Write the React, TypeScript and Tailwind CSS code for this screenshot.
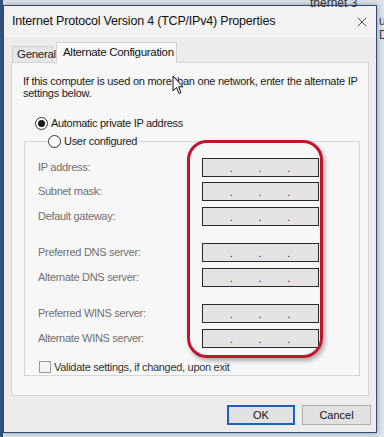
import React from "react";
import { X } from "lucide-react";

const font = { fontFamily: '"Liberation Sans", Arial, sans-serif' };

function IpBox() {
  return (
    <div className="w-[117px] h-[19px] border border-[#2a2a2a] bg-[#e3e3e3] grid grid-cols-4 text-[11px] leading-[19px] text-[#222]">
      <span />
      <span className="-ml-[2px]">.</span>
      <span className="-ml-[2px]">.</span>
      <span className="-ml-[2px]">.</span>
    </div>
  );
}

function Row({ label, className = "" }: { label: string; className?: string }) {
  return (
    <div className={"flex items-center h-[19px] " + className}>
      <div className="w-[164px] text-[11px] tracking-[-0.3px] text-[#6f6f6f]">{label}</div>
      <IpBox />
    </div>
  );
}

function Radio({ checked }: { checked?: boolean }) {
  return (
    <span className="w-[13px] h-[13px] rounded-full border border-[#333] bg-white flex items-center justify-center shrink-0">
      {checked && <span className="w-[7px] h-[7px] rounded-full bg-[#1a1a1a]" />}
    </span>
  );
}

export default function App() {
  return (
    <div className="relative w-[384px] h-[437px] bg-[#dde4ec] overflow-hidden" style={font}>
      {/* window behind */}
      <div className="absolute left-[310px] -top-[6px] text-[12px] text-[#333]">thernet 3</div>
      <div className="absolute left-[379px] top-[14px] text-[12px] leading-[14px] text-[#333]">u<br />D</div>
      <div className="absolute left-0 top-0 w-[3px] h-[437px] bg-[#33507a]" />

      <div className="ml-[3px] mt-[5px] w-[374px] h-[428px] border border-[#2d4a78] bg-[#ececec] flex flex-col shadow-[0_0_6px_rgba(0,0,0,0.35)]">
        {/* title bar */}
        <div className="h-[31px] bg-[#f2f2f2] flex items-center justify-between pl-[8px] pr-[6px] shrink-0">
          <span className="text-[12.5px] tracking-[-0.2px] text-[#111]">Internet Protocol Version 4 (TCP/IPv4) Properties</span>
          <X className="w-[16px] h-[16px] text-[#222]" strokeWidth={1.2} />
        </div>

        <div className="px-[7px] pt-[5px] flex flex-col">
          {/* tabs */}
          <div className="flex items-end h-[20px]">
            <div className="ml-[1px] h-[16px] w-[41px] border border-b-0 border-[#d0d0d0] bg-[#e6e6e6] text-[11.5px] tracking-[-0.3px] text-[#222] flex items-center pl-[4px]">
              General
            </div>
            <div className="ml-[3px] -mb-px relative z-10 h-[21px] w-[121px] border border-b-0 border-[#d0d0d0] bg-[#f8f8f8] text-[11.5px] tracking-[-0.3px] text-[#111] flex items-center pl-[6px]">
              Alternate Configuration
            </div>
          </div>

          {/* panel */}
          <div className="h-[334px] w-[358px] border border-[#d4d4d4] bg-[#f7f7f7] flex flex-col pl-[11px]">
            <p className="mt-[12px] text-[11px] leading-[12px] tracking-[-0.25px] text-[#1a1a1a]">
              If this computer is used on more than one network, enter the alternate IP
              <br />
              settings below.
            </p>

            <div className="mt-[18px] ml-[12px] flex items-center gap-[3px] h-[13px]">
              <Radio checked />
              <span className="text-[11px] tracking-[-0.3px] text-[#1a1a1a]">Automatic private IP address</span>
            </div>

            <fieldset className="mt-[3px] ml-[1px] w-[336px] border border-[#d6d6d6] pl-[13px] pb-[1px]">
              <legend className="ml-[10px] flex items-center gap-[3px] pr-[2px]">
                <Radio />
                <span className="text-[11px] tracking-[-0.3px] text-[#1a1a1a]">User configured</span>
              </legend>
              <Row label="IP address:" className="mt-[8px]" />
              <Row label="Subnet mask:" className="mt-[5px]" />
              <Row label="Default gateway:" className="mt-[6px]" />
              <Row label="Preferred DNS server:" className="mt-[17px]" />
              <Row label="Alternate DNS server:" className="mt-[6px]" />
              <Row label="Preferred WINS server:" className="mt-[17px]" />
              <Row label="Alternate WINS server:" className="mt-[6px]" />
              <div className="mt-[13px] flex items-center gap-[3px] h-[13px] ml-[1px]">
                <span className="w-[12px] h-[12px] border border-[#9a9a9a] bg-[#f3f3f3]" />
                <span className="text-[11px] tracking-[-0.3px] text-[#333]">Validate settings, if changed, upon exit</span>
              </div>
            </fieldset>
          </div>

          {/* buttons */}
          <div className="mt-[9px] flex justify-end gap-[7px] -mr-[2px]">
            <button className="w-[68px] h-[20px] border-2 border-[#1f5fbf] bg-[#e1e1e1] text-[11px] text-[#111]">OK</button>
            <button className="w-[69px] h-[20px] border border-[#adadad] bg-[#e1e1e1] text-[11px] text-[#111]">Cancel</button>
          </div>
        </div>
      </div>

      {/* red annotation */}
      <div className="absolute left-[187px] top-[140px] w-[136px] h-[218px] border-[3px] border-[#c2142c] rounded-[20px] shadow-[2px_3px_4px_rgba(0,0,0,0.3)]" />

      {/* mouse cursor */}
      <svg className="absolute left-[172px] top-[75px]" width="12" height="20" viewBox="0 0 12 20">
        <path d="M1 1 L1 16 L4.5 12.5 L7 18.5 L9 17.6 L6.6 11.8 L11 11.8 Z" fill="#fff" stroke="#111" strokeWidth="1" strokeLinejoin="round" />
      </svg>
    </div>
  );
}
